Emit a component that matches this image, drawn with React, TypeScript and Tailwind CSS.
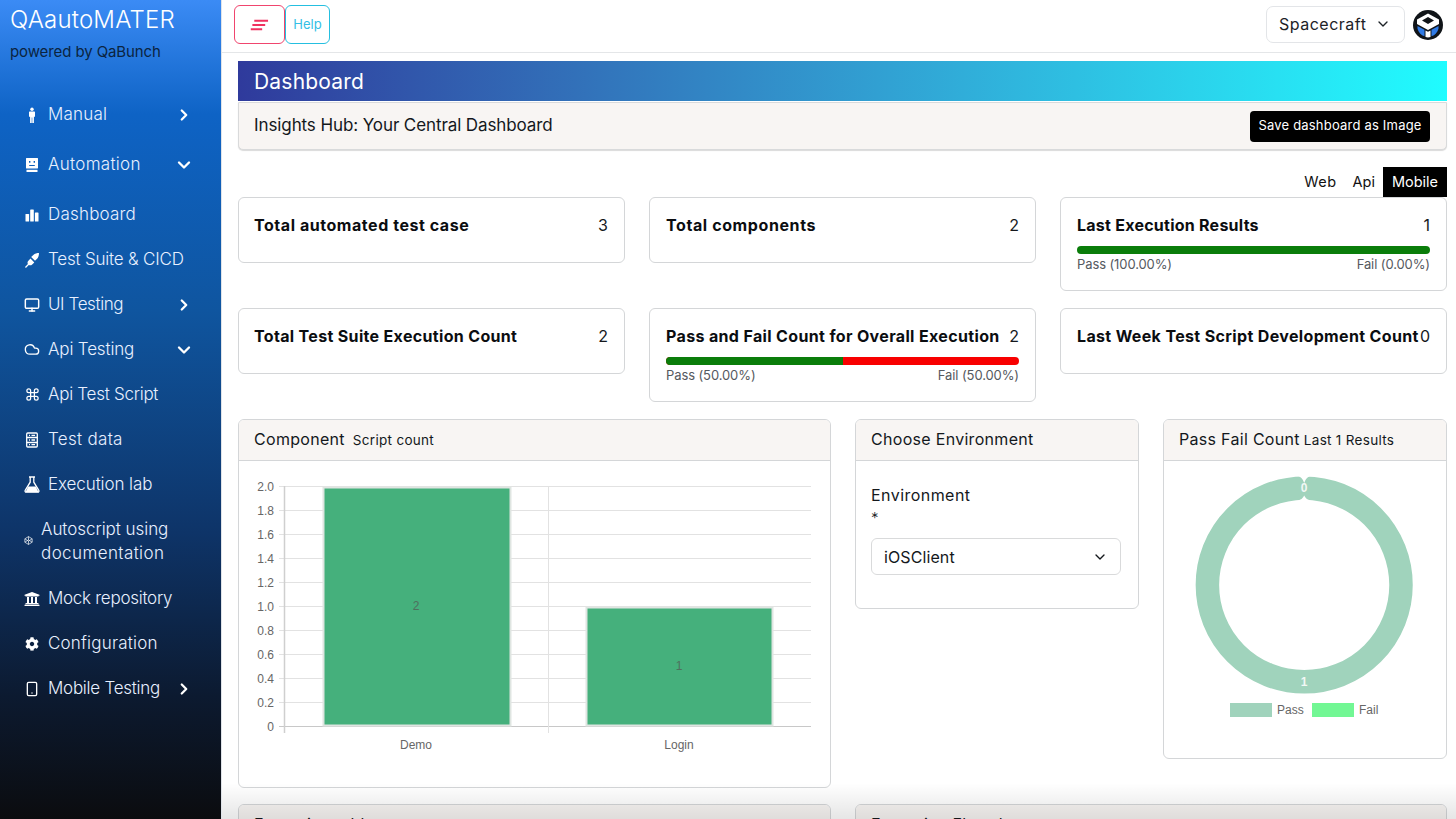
import { ChevronDown, ChevronRight, Cloud, Command, Monitor, Smartphone } from "lucide-react";
import { FaCog, FaUniversity } from "react-icons/fa";
import type { ReactNode } from "react";

const sans = "font-['Inter','Liberation_Sans',sans-serif]";

type NavItem = {
  label: string;
  icon: ReactNode;
  h: string;
  track: string;
  chevron?: "right" | "down";
};

const ManIcon = () => (
  <svg viewBox="0 0 16 16" className="w-4 h-4" fill="currentColor">
    <circle cx="8" cy="2.2" r="1.7" />
    <path d="M5.6 4.6h4.8c.4 0 .6.3.6.6v4.6H9.9V16H8.3v-5.5h-.6V16H6.1V9.8H5V5.2c0-.3.2-.6.6-.6z" />
  </svg>
);

const RobotIcon = () => (
  <svg viewBox="0 0 16 16" className="w-4 h-4" fill="currentColor">
    <path fillRule="evenodd" d="M2.5 1h11c.3 0 .5.2.5.5v9.5c0 .3-.2.5-.5.5h-11a.5.5 0 0 1-.5-.5V1.500c0-.3.2-.5.500-.5zM5 4v1.800h1.400V4H5zm4.600 0v1.800H11V4H9.600zM5.200 8v1h5.600V8H5.200z" />
    <path d="M2.500 12.800h11V15h-11z" />
  </svg>
);

const BarsIcon = () => (
  <svg viewBox="0 0 16 16" className="w-4 h-4" fill="currentColor">
    <rect x="1.500" y="7" width="3.600" height="7.500" rx="0.600" />
    <rect x="6.200" y="2.500" width="3.600" height="12" rx="0.600" />
    <rect x="10.900" y="5.500" width="3.600" height="9" rx="0.600" />
  </svg>
);

const PlugIcon = () => (
  <svg viewBox="0 0 16 16" className="w-4 h-4" fill="currentColor">
    <path d="M9.300 2.900C10.800 1.500 13 1 15 1c0 2-.5 4.200-1.900 5.700L11 8.800 7.200 5z" />
    <path d="M6.500 6.600 4.400 8.700c-1 1-1.100 2.400-.5 3.400L1 15l.9.900 2.900-2.900c1 .6 2.400.5 3.400-.5l2.100-2.100z" />
  </svg>
);

const DataIcon = () => (
  <svg viewBox="0 0 16 16" className="w-4 h-4" fill="none" stroke="currentColor" strokeWidth="1.300">
    <rect x="2.700" y="1" width="10.600" height="14" rx="1" />
    <path d="M2.700 5.500h10.600M2.700 10.500h10.600M5 3.300h1M5 8h1M5 12.700h1M7.500 3.300h3.500M7.500 8h3.500M7.500 12.700h3.500" />
  </svg>
);

const FlaskIcon = () => (
  <svg viewBox="0 0 16 17" className="w-4 h-[17px]" fill="none" stroke="currentColor" strokeWidth="1.300">
    <path d="M5 1h6M6.200 1v5.200L1.200 14.300c-.5.900.1 1.900 1.100 1.900h11.400c1 0 1.600-1 1.100-1.900L9.800 6.200V1" />
    <path d="M4.300 10.500h7.400l3 5.700H1.300z" fill="currentColor" stroke="none" />
  </svg>
);

const CubeIcon = () => (
  <svg viewBox="0 0 16 16" className="w-[9px] h-[9px]" fill="none" stroke="currentColor" strokeWidth="1.200">
    <path d="M8 1l6.500 4v6L8 15l-6.500-4V5zM1.500 5 8 9l6.500-4M8 9v6M1.500 11 8 7l6.500 4M8 1v6" />
  </svg>
);

const navItems: NavItem[] = [
  { label: "Manual", icon: <ManIcon />, h: "h-[50px]", track: "tracking-[0.2px]", chevron: "right" },
  { label: "Automation", icon: <RobotIcon />, h: "h-[50px]", track: "tracking-[0.3px]", chevron: "down" },
  { label: "Dashboard", icon: <BarsIcon />, h: "h-[50px] mb-[-3px]", track: "tracking-[0.2px]" },
  { label: "Test Suite & CICD", icon: <PlugIcon />, h: "h-[45px]", track: "tracking-[-0.2px]" },
  { label: "UI Testing", icon: <Monitor size={16} strokeWidth={2.200} />, h: "h-[45px]", track: "tracking-[-0.4px]", chevron: "right" },
  { label: "Api Testing", icon: <Cloud size={17} />, h: "h-[45px]", track: "tracking-[-0.15px]", chevron: "down" },
  { label: "Api Test Script", icon: <Command size={15} />, h: "h-[45px]", track: "tracking-[-0.27px]" },
  { label: "Test data", icon: <DataIcon />, h: "h-[45px]", track: "tracking-[0.3px]" },
  { label: "Execution lab", icon: <FlaskIcon />, h: "h-[45px]", track: "tracking-[-0.1px]" },
  { label: "Mock repository", icon: <FaUniversity size={16} />, h: "h-[45px]", track: "tracking-[-0.27px]" },
  { label: "Configuration", icon: <FaCog size={14} />, h: "h-[45px]", track: "tracking-[0.2px]" },
  { label: "Mobile Testing", icon: <Smartphone size={16} />, h: "h-[45px]", track: "tracking-[-0.25px]", chevron: "right" },
];

function NavRow({ item }: { item: NavItem }) {
  return (
    <div className={`flex items-center pl-[24px] pr-[28px] ${item.h}`}>
      <span className="w-[16px] h-4 flex items-center justify-center">{item.icon}</span>
      <span className={`ml-[8px] text-[17px] font-light text-[#e8f0ff] whitespace-nowrap ${item.track}`}>{item.label}</span>
      {item.chevron === "right" && <ChevronRight size={18} strokeWidth={3} className="ml-auto" />}
      {item.chevron === "down" && <ChevronDown size={20} strokeWidth={2.800} className="ml-auto -mr-px" />}
    </div>
  );
}

function Sidebar() {
  return (
    <aside className="w-[222px] shrink-0 h-full bg-[linear-gradient(180deg,#3b8bf5_0%,#0e63c5_14%,#0f559f_38%,#0e3468_65%,#0c1a30_85%,#0b0c0f_100%)] text-white border-r border-[#dfe3e8]">
      <div className="pl-[10px] pt-[4px] text-[24px] leading-[32px] font-light tracking-[0.2px]">QAautoMATER</div>
      <div className="pl-[10px] mt-[4px] text-[15px] leading-[24px] text-[#0b2440] tracking-[-0.1px]">powered by QaBunch</div>
      <nav className="mt-[26px]">
        {navItems.slice(0, 9).map((item, i) => (
          <NavRow key={i} item={item} />
        ))}
        <div className="flex items-center h-[69px] pl-[24px] pb-[2px]">
          <span className="w-[9px] flex justify-center"><CubeIcon /></span>
          <span className="ml-[8px] text-[17px] leading-[24px] font-light text-[#e8f0ff] tracking-[-0.05px]">
            Autoscript using
            <br />
            <span className="tracking-[0.4px]">documentation</span>
          </span>
        </div>
        {navItems.slice(9).map((item, i) => (
          <NavRow key={i} item={item} />
        ))}
      </nav>
    </aside>
  );
}

function Logo() {
  return (
    <svg viewBox="0 0 30 30" className="w-[30px] h-[30px]">
      <circle cx="15" cy="15" r="15" fill="#101418" />
      <path d="M15 3.500l11 6v4.500L15 20 4 14V9.500z" fill="#fff" />
      <path d="M15 7l6 3.500-6 3.500-6-3.500z" fill="#101418" />
      <path d="M4.500 16l7 3.800v6.400c-3.500-1-6-4-7-7.500zM25.500 16l-7 3.800v6.400c3.500-1 6-4 7-7.500z" fill="#2f7ae5" />
      <path d="M12.500 20.500 15 21.800l2.500-1.300v6.600c-1.600.5-3.400.5-5 0z" fill="#fff" />
    </svg>
  );
}

function Header() {
  return (
    <header className="h-[53px] shrink-0 flex items-start border-b border-[#e4e6e8] pl-[12px] pr-[13px] pt-[5px]">
      <button className="w-[51px] h-[39px] rounded-[6px] border border-[#f0456e] flex items-center justify-center">
        <svg viewBox="0 0 20 12" className="w-[19px] h-[12px]" fill="none" stroke="#f0325f" strokeWidth="2.200">
          <path d="M4.500 1.500H19M2.500 6H16M.8 10.500h12" />
        </svg>
      </button>
      <button className="w-[45px] h-[39px] rounded-[6px] border border-[#25bfe0] text-[#35bfe6] text-[13px]">Help</button>
      <div className="ml-auto flex items-center gap-[8px] pt-px">
        <div className="w-[139px] h-[37px] rounded-[7px] border border-[#e3e5e8] flex items-center pl-[12px] pr-[13px] pb-[2px] text-[16px] tracking-[0.5px] text-[#1d2227]">
          Spacecraft
          <ChevronDown size={16} className="ml-auto" />
        </div>
        <Logo />
      </div>
    </header>
  );
}

type Bar = { passPct: number; pass: string; fail: string };

function StatCard({ title, value, bar, h, track, pad }: { title: string; value: string; bar?: Bar; h: string; track: string; pad: string }) {
  return (
    <div className={`rounded-[6px] border border-[#d4d6d8] pr-[16px] pt-[15px] ${pad} ${h}`}>
      <div className="flex items-center justify-between text-[16px] leading-[24px]">
        <span className={`font-bold text-[#0b0d10] whitespace-nowrap ${track}`}>{title}</span>
        <span className="text-[#15181c]">{value}</span>
      </div>
      {bar && (
        <>
          <div className="mt-[9px] h-[8px] rounded-full bg-[#f80000] overflow-hidden">
            <div className="h-full bg-[#0a7d0a]" style={{ width: `${bar.passPct}%` }} />
          </div>
          <div className="flex justify-between text-[13px] leading-[20px] text-[#55595e] tracking-[-0.1px]">
            <span>{bar.pass}</span>
            <span>{bar.fail}</span>
          </div>
        </>
      )}
    </div>
  );
}

function Panel({ title, sub, subClass, h, children }: { title: string; sub?: string; subClass?: string; h: string; children: ReactNode }) {
  return (
    <div className={`rounded-[6px] border border-[#d4d6d8] overflow-hidden ${h}`}>
      <div className="h-[41px] bg-[#f8f5f3] border-b border-[#d4d6d8] flex items-baseline pt-[7px] pl-[15px] text-[16px] leading-[24px] tracking-[0.3px] text-[#14181c] whitespace-nowrap">
        {title}
        {sub && <span className={subClass}>{sub}</span>}
      </div>
      {children}
    </div>
  );
}

function BarChart() {
  const ticks = ["2.0", "1.8", "1.6", "1.4", "1.2", "1.0", "0.8", "0.6", "0.4", "0.2", "0"];
  return (
    <svg viewBox="0 0 590 326" className="w-[590px] h-[326px] block font-['Liberation_Sans',sans-serif]">
      {ticks.map((t, i) => {
        const y = 25 + i * 24;
        return (
          <g key={t}>
            <line x1="40" x2="572" y1={y + 0.500} y2={y + 0.500} stroke={i === 10 ? "#c8c8c8" : "#e2e2e2"} />
            <text x="35" y={y + 4.500} textAnchor="end" fontSize="12" fill="#666">{t}</text>
          </g>
        );
      })}
      <line x1="45.500" x2="45.500" y1="25" y2="272" stroke="#cfcfcf" strokeWidth="1.500" />
      <line x1="309.500" x2="309.500" y1="25" y2="272" stroke="#e2e2e2" />
      <rect x="84.500" y="26.500" width="187" height="238" fill="#45b07c" stroke="#dfe5e1" strokeWidth="2" />
      <rect x="347.500" y="146.500" width="186" height="118" fill="#45b07c" stroke="#dfe5e1" strokeWidth="2" />
      <text x="177" y="149" textAnchor="middle" fontSize="12" fill="#4f6f5e">2</text>
      <text x="440" y="209" textAnchor="middle" fontSize="12" fill="#4f6f5e">1</text>
      <text x="177" y="288" textAnchor="middle" fontSize="12" fill="#666">Demo</text>
      <text x="440" y="288" textAnchor="middle" fontSize="12" fill="#666">Login</text>
    </svg>
  );
}

function Donut() {
  return (
    <svg viewBox="0 0 282 298" className="w-[282px] h-[298px] block font-['Liberation_Sans',sans-serif]">
      <circle cx="140.200" cy="124" r="96.800" fill="none" stroke="#a0d3bc" strokeWidth="23.500" />
      <path d="M132 14 Q138.700 16 140.200 22 Q141.700 16 148.400 14z" fill="#fff" />
      <path d="M132.500 40 Q138.700 38.500 140.200 34.500 Q141.700 38.500 147.900 40z" fill="#fff" />
      <text x="140.200" y="31" textAnchor="middle" fontSize="12" fontWeight="700" fill="#f2f8f5">0</text>
      <text x="140.200" y="225" textAnchor="middle" fontSize="12" fontWeight="700" fill="#f2f8f5">1</text>
      <rect x="66" y="242" width="42" height="14" fill="#a0d3bc" />
      <text x="113" y="253" fontSize="12" fill="#666">Pass</text>
      <rect x="148" y="242" width="42" height="14" fill="#72f794" />
      <text x="195" y="253" fontSize="12" fill="#666">Fail</text>
    </svg>
  );
}

export default function App() {
  return (
    <div className={`w-[1456px] h-[819px] overflow-hidden flex bg-white ${sans}`}>
      <Sidebar />
      <div className="relative flex-1 min-w-0 flex flex-col overflow-hidden">
        <Header />
        <main className="pl-[16px] pr-[9px] pt-[8px]">
          <div className="h-[40px] bg-gradient-to-r from-[#2f3a9c] to-[#1ffcff] flex items-center pl-[16px] pt-px text-[21px] tracking-[0.2px] text-white">Dashboard</div>
          <div className="mt-px h-[48px] rounded-b-[5px] bg-[#f8f5f3] border border-[#d9dadb] shadow-[0_1px_1px_rgba(0,0,0,0.15)] flex items-center pl-[15px] pr-[16px] text-[17px] tracking-[-0.1px] text-[#14181c]">
            Insights Hub: Your Central Dashboard
            <button className="ml-auto w-[180px] h-[31px] rounded-[4px] bg-black text-white text-[13px] tracking-[0.2px]">Save dashboard as Image</button>
          </div>
          <div className="mt-[17px] flex justify-end h-[30px] items-stretch text-[14.500px] text-[#111]">
            <span className="px-[8px] flex items-center tracking-[0.5px]">Web</span>
            <span className="px-[8px] flex items-center">Api</span>
            <span className="w-[64px] bg-black text-white flex items-center justify-center">Mobile</span>
          </div>
          <div className="grid grid-cols-[387px_387px_387px] gap-x-[24px] gap-y-[17px] items-start">
            <StatCard title="Total automated test case" value="3" h="h-[66px]" pad="pl-[15px]" track="tracking-[0.55px]" />
            <StatCard title="Total components" value="2" h="h-[66px]" pad="pl-[16px]" track="tracking-[0.6px]" />
            <StatCard title="Last Execution Results" value="1" h="h-[94px]" pad="pl-[16px]" track="tracking-[0.25px]" bar={{ passPct: 100, pass: "Pass (100.00%)", fail: "Fail (0.00%)" }} />
            <StatCard title="Total Test Suite Execution Count" value="2" h="h-[66px]" pad="pl-[15px]" track="tracking-[0.33px]" />
            <StatCard title="Pass and Fail Count for Overall Execution" value="2" h="h-[94px]" pad="pl-[16px]" track="tracking-[0.35px]" bar={{ passPct: 50, pass: "Pass (50.00%)", fail: "Fail (50.00%)" }} />
            <StatCard title="Last Week Test Script Development Count" value="0" h="h-[66px]" pad="pl-[16px]" track="tracking-[0.35px]" />
          </div>
          <div className="mt-[17px] grid grid-cols-[593px_284px_284px] gap-x-[24px] items-start">
            <Panel title="Component" sub="Script count" subClass="ml-[8px] text-[13.500px] tracking-[0.3px]" h="h-[369px]"><BarChart /></Panel>
            <Panel title="Choose Environment" h="h-[190px]">
              <div className="pl-[15px] pr-[17px] pt-[22px]">
                <div className="text-[16px] leading-[24px] tracking-[0.45px] text-[#14181c]">Environment</div>
                <div className="text-[15px] leading-[21px] font-light text-[#14181c]">*</div>
                <div className="mt-[10px] h-[37px] rounded-[6px] border border-[#d9dadb] flex items-center pl-[12px] pr-[12px] text-[16px] tracking-[0.1px] text-[#14181c]">
                  iOSClient
                  <ChevronDown size={16} className="ml-auto" />
                </div>
              </div>
            </Panel>
            <Panel title="Pass Fail Count" sub="Last 1 Results" subClass="ml-[4px] text-[13.500px]" h="h-[340px]"><Donut /></Panel>
          </div>
          <div className="mt-[16px] grid grid-cols-[593px_592px] gap-x-[24px]">
            <Panel title="Execution table" h="h-[100px]"><div /></Panel>
            <Panel title="Execution Flowchart" h="h-[100px]"><div /></Panel>
          </div>
        </main>
        <div className="absolute inset-x-0 bottom-0 h-[36px] bg-gradient-to-b from-black/0 to-black/10 pointer-events-none" />
      </div>
    </div>
  );
}
